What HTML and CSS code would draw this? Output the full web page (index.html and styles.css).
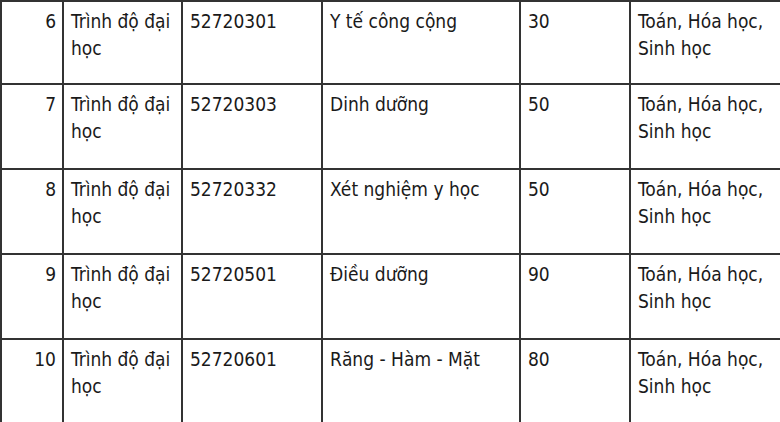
FILE: index.html
```html
<!DOCTYPE html>
<html lang="vi">
<head>
<meta charset="utf-8">
<link rel="stylesheet" href="styles.css">
</head>
<body>
<div class="table">
  <div class="row">
    <div class="cell num">6</div>
    <div class="cell">Trình độ đại học</div>
    <div class="cell">52720301</div>
    <div class="cell">Y tế công cộng</div>
    <div class="cell">30</div>
    <div class="cell subj">Toán, Hóa học, Sinh học</div>
  </div>
  <div class="row">
    <div class="cell num">7</div>
    <div class="cell">Trình độ đại học</div>
    <div class="cell">52720303</div>
    <div class="cell">Dinh dưỡng</div>
    <div class="cell">50</div>
    <div class="cell subj">Toán, Hóa học, Sinh học</div>
  </div>
  <div class="row">
    <div class="cell num">8</div>
    <div class="cell">Trình độ đại học</div>
    <div class="cell">52720332</div>
    <div class="cell">Xét nghiệm y học</div>
    <div class="cell">50</div>
    <div class="cell subj">Toán, Hóa học, Sinh học</div>
  </div>
  <div class="row">
    <div class="cell num">9</div>
    <div class="cell">Trình độ đại học</div>
    <div class="cell">52720501</div>
    <div class="cell">Điều dưỡng</div>
    <div class="cell">90</div>
    <div class="cell subj">Toán, Hóa học, Sinh học</div>
  </div>
  <div class="row">
    <div class="cell num">10</div>
    <div class="cell">Trình độ đại học</div>
    <div class="cell">52720601</div>
    <div class="cell">Răng - Hàm - Mặt</div>
    <div class="cell">80</div>
    <div class="cell subj">Toán, Hóa học, Sinh học</div>
  </div>
</div>
</body>
</html>
```
FILE: styles.css
```css
html, body {
  margin: 0;
  padding: 0;
  background: #ffffff;
  overflow: hidden;
}

.table {
  display: grid;
  grid-template-columns: 62px 119px 140px 198px 110px 160px;
  width: max-content;
  border-top: 2px solid #333333;
  border-left: 2px solid #333333;
  font-family: "DejaVu Sans Condensed", "DejaVu Sans", sans-serif;
  font-size: 19px;
  line-height: 27px;
  color: #1a1a1a;
}

.row {
  display: contents;
}

.cell {
  box-sizing: border-box;
  height: 85px;
  padding: 6px 6px 0 7px;
  border-right: 2px solid #333333;
  border-bottom: 2px solid #333333;
}

.row:first-child .cell {
  height: 83px;
}

.num {
  text-align: right;
  padding-right: 6px;
}
```
